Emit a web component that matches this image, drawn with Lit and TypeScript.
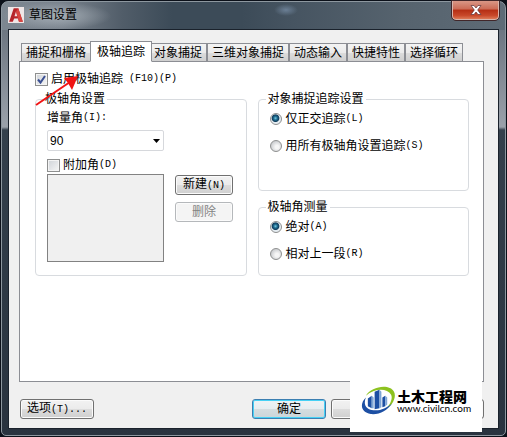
import { LitElement, html, css } from "lit";
import { customElement, state } from "lit/decorators.js";

const TABS = ["捕捉和栅格", "极轴追踪", "对象捕捉", "三维对象捕捉", "动态输入", "快捷特性", "选择循环"];

@customElement("app-root")
export class AppRoot extends LitElement {
  @state() private active = 1;

  static styles = css`
    :host {
      display: flex;
      min-height: 100vh;
      box-sizing: border-box;
      padding: 1px;
      background: #0b1019;
      color: #000;
      font: 12px/16px "Liberation Sans", "Noto Sans CJK SC", sans-serif;
    }
    * { box-sizing: border-box; }
    .window {
      flex: 1;
      min-width: 0;
      position: relative;
      display: flex;
      flex-direction: column;
      padding: 0 6px 6px;
      border: 1px solid #8d979f;
      border-radius: 7px 7px 5px 5px;
      background:
        radial-gradient(ellipse at 50% 50%, #6b7f95 0, transparent 70%) 272px 2px / 24px 12px no-repeat,
        radial-gradient(ellipse at 50% 50%, #a4adb5 0, transparent 70%) 0 0 / 110px 28px no-repeat,
        linear-gradient(90deg, #7d8791 0, #79828c 60px, #515d69 120px, #3c4b58 170px, #3c4b58 240px, #465461 290px, #56636e 400px, #5e6b76 100%) top / 100% 28px no-repeat,
        linear-gradient(#6d7681 28px, #9aa1aa 125px, #34404c 128px, #29333f 100%);
    }
    .title {
      display: flex;
      align-items: flex-start;
      height: 27px;
      flex: none;
    }
    .logo { width: 16px; height: 16px; margin: 5px 5px 0 0; }
    h1 {
      margin: 5px 0 0;
      font-size: 12px;
      font-weight: 400;
    }
    .close {
      margin: -1px 0 0 auto;
      width: 47px;
      height: 19px;
      padding: 0;
      border: 1px solid #d9b5ac;
      border-top: 0;
      border-radius: 0 0 4px 4px;
      outline: 1px solid #41272a;
      background: linear-gradient(#d99786, #cb6a55 45%, #b52e14 50%, #c8482a 80%, #dd7957);
    }
    .close svg { display: block; margin: auto; }
    .body {
      flex: 1;
      display: flex;
      flex-direction: column;
      padding: 11px 14px 9px 10px;
      border: 1px solid #1a222c;
      background: #f0f0f0;
    }
    .tabs {
      display: flex;
      align-items: flex-end;
      height: 21px;
      margin-bottom: -1px;
      padding-left: 2px;
      z-index: 1;
    }
    .tab {
      flex: none;
      height: 19px;
      padding: 0 4px;
      border: 1px solid #8c8e94;
      background: linear-gradient(#f3f3f3, #ebebeb 50%, #dddddd 50%, #cfcfcf);
      font: inherit;
      line-height: 16px;
      white-space: nowrap;
    }
    .tab.on {
      position: relative;
      height: 21px;
      margin: 0 -3px 0 -1px;
      padding: 0 6px;
      border-bottom-color: #fff;
      background: #fff;
    }
    .panel {
      flex: 1;
      min-height: 300px;
      padding: 9px 14px 9px 15px;
      border: 1px solid #8c8e94;
      background: #fff;
    }
    label { display: flex; align-items: center; }
    .k {
      font-family: "Liberation Mono", monospace;
      font-size: 10px;
      white-space: pre;
    }
    input { appearance: none; flex: none; margin: 0; }
    input[type="checkbox"] {
      width: 13px;
      height: 13px;
      margin-right: 3px;
      border: 1px solid #8e8f8f;
      outline: 1px solid #f4f4f4;
      outline-offset: -2px;
      background: linear-gradient(135deg, #cfd3d8, #f6f6f6);
    }
    .tick { position: relative; display: flex; }
    .tick svg { position: absolute; left: 0; top: 0; pointer-events: none; }
    input[type="radio"] {
      width: 12px;
      height: 12px;
      margin-right: 4px;
      border: 1px solid #8e8f8f;
      border-radius: 50%;
      background: radial-gradient(circle at 60% 60%, #f6f6f6 20%, #cdcfd2 70%);
    }
    input[type="radio"]:checked {
      background: radial-gradient(circle at 45% 42%, #79c9df 0, #1f6f93 22%, #103d5c 42%, #e6edf2 54%);
    }
    .enable { height: 16px; }
    .groups {
      display: grid;
      grid-template-columns: 1fr 1fr;
      gap: 8px 11px;
      margin-top: 4px;
    }
    fieldset {
      min-width: 0;
      margin: 0;
      padding: 0 11px;
      border: 1px solid #d8dbdf;
      border-radius: 4px;
    }
    legend { height: 16px; margin-left: -4px; padding: 0 2px; }
    .angle { grid-row: span 2; height: 185px; }
    .radios { height: 100px; }
    .radios.short { height: 77px; }
    .radios label { height: 16px; margin: 4px 0 11px; }
    .combo {
      position: relative;
      width: 117px;
      margin: 4px 0 6px;
    }
    select {
      display: block;
      appearance: none;
      width: 100%;
      height: 21px;
      padding: 0 2px;
      border: 1px solid #d6d8dc;
      border-radius: 2px;
      background: #fff;
      color: #000;
      font: 12px/16px "Liberation Sans", sans-serif;
    }
    .combo svg { position: absolute; right: 4px; top: 9px; pointer-events: none; }
    .inc { height: 16px; margin-top: 3px; }
    .row { display: flex; gap: 11px; margin-top: 1px; }
    .list {
      width: 117px;
      height: 88px;
      border: 1px solid #828282;
      background: #f0f0f0;
    }
    .side { display: flex; flex-direction: column; gap: 7px; padding-top: 1px; }
    .btn {
      height: 20px;
      width: 74px;
      padding: 0;
      border: 1px solid #707070;
      border-radius: 3px;
      box-shadow: inset 0 0 0 1px #fbfbfb;
      background: linear-gradient(#f2f2f2, #ebebeb 50%, #dddddd 50%, #cfcfcf);
      color: #000;
      font: inherit;
      line-height: 16px;
      white-space: nowrap;
    }
    .side .btn { width: 58px; }
    .btn:disabled { border-color: #b5b8bb; background: #f4f4f4; color: #838383; }
    .btn.main {
      border-color: #3c7fb1;
      box-shadow: inset 0 0 0 1px #46d1f5;
      background: linear-gradient(#eef3f5, #e6edf0 50%, #d5dde0 50%, #cbd5d9);
    }
    .actions { display: flex; gap: 5px; margin-top: 17px; padding-left: 1px; }
    .options { margin-right: auto; }
    .arrow { position: absolute; left: 32px; top: 72px; pointer-events: none; }
    .brand {
      position: absolute;
      right: 23px;
      bottom: 3px;
      width: 132px;
      height: 59px;
      display: flex;
      align-items: center;
      padding: 0 0 4px 11px;
      background: #fff;
    }
    .brand svg { flex: none; }
    .words { margin-left: 1px; white-space: nowrap; }
    .name { font: 900 14px/14px "Noto Sans CJK SC", sans-serif; display: block; }
    .site { font: 10px/10px Lato, sans-serif; display: block; }
  `;

  private radio(group: string, label: string, key: string, checked = false) {
    return html`<label><input type="radio" name=${group} ?checked=${checked} />${label}<span class="k">${key}</span></label>`;
  }

  render() {
    return html`
      <div class="window">
        <header class="title">
          <svg class="logo" viewBox="0 0 14 14" aria-hidden="true">
            <rect width="14" height="14" fill="#efe6e6" />
            <path d="M1 13 5 1h4l4 12H9.600l-.8-3H5.400L4.200 13z" fill="#b5242a" />
            <path d="m7 4-1.300 4h2.500z" fill="#f3dcdc" />
            <path d="m9 1 4 12H9.600L7 4z" fill="#d8443f" />
          </svg>
          <h1>草图设置</h1>
          <button class="close" aria-label="关闭">
            <svg width="12" height="10" viewBox="0 0 12 10">
              <path d="M1 .5h3L6 3 8 .5h3L7.700 5 11 9.500H8L6 7 4 9.500H1L4.300 5z" fill="#fff" stroke="#5b3036" stroke-width=".7" />
            </svg>
          </button>
        </header>
        <main class="body">
          <nav class="tabs" role="tablist">
            ${TABS.map((t, i) => html`<button role="tab" aria-selected=${i === this.active} class="tab ${i === this.active ? "on" : ""}" @click=${() => (this.active = i)}>${t}</button>`)}
          </nav>
          <section class="panel">
            <label class="enable">
              <span class="tick"><input type="checkbox" checked />
                <svg width="13" height="13" viewBox="0 0 13 13"><path d="M3 6.500 5.500 9.500 10 3" fill="none" stroke="#3a4f92" stroke-width="2" /></svg>
              </span>启用极轴追踪<span class="k"> (F10)(P)</span>
            </label>
            <div class="groups">
              <fieldset class="angle">
                <legend>极轴角设置</legend>
                <label class="inc" for="inc">增量角<span class="k">(I):</span></label>
                <div class="combo">
                  <select id="inc"><option>90</option></select>
                  <svg width="7" height="4" viewBox="0 0 7 4"><path d="M0 0h7L3.500 4z" /></svg>
                </div>
                <label><input type="checkbox" />附加角<span class="k">(D)</span></label>
                <div class="row">
                  <div class="list"></div>
                  <div class="side">
                    <button class="btn">新建<span class="k">(N)</span></button>
                    <button class="btn" disabled>删除</button>
                  </div>
                </div>
              </fieldset>
              <fieldset class="radios">
                <legend>对象捕捉追踪设置</legend>
                ${this.radio("track", "仅正交追踪", "(L)", true)}
                ${this.radio("track", "用所有极轴角设置追踪", "(S)")}
              </fieldset>
              <fieldset class="radios short">
                <legend>极轴角测量</legend>
                ${this.radio("measure", "绝对", "(A)", true)}
                ${this.radio("measure", "相对上一段", "(R)")}
              </fieldset>
            </div>
          </section>
          <footer class="actions">
            <button class="btn options">选项<span class="k">(T)...</span></button>
            <button class="btn main">确定</button>
            <button class="btn" aria-label="取消"></button>
            <button class="btn" aria-label="帮助"></button>
          </footer>
        </main>
        <svg class="arrow" width="46" height="34" viewBox="0 0 46 34" aria-hidden="true">
          <path d="M2 31 36 8" stroke="#f01414" stroke-width="2" />
          <path d="M44 2 30 4l4 5 4 7z" fill="#f01414" />
        </svg>
        <aside class="brand">
          <svg width="35" height="31" viewBox="0 0 36 32" aria-hidden="true">
            <path d="M5 11C10 2 29-2 34 7c3 6-2 15-10 19 6-5 9-12 7-16C27 3 14 3 5 11z" fill="#8dc21f" />
            <path d="M5 13c-7 7-5 15 5 17 9 1 17-4 22-11-6 5-13 8-19 7C5 25 2 20 5 13z" fill="#1d4fa3" />
            <path d="M7 14l4-3v13l-4-2zM14 7l5-2v19l-5 1zM22 13l3-2v11l-3 1z" fill="#1d4fa3" />
            <path d="M11 11l2 2v11l-2 0zM19 5l2 2v16l-2 1zM25 11l2 2v7l-2 2z" fill="#7fa6d6" />
          </svg>
          <div class="words"><span class="name">土木工程网</span><span class="site">www.civilcn.com</span></div>
        </aside>
      </div>
    `;
  }
}
